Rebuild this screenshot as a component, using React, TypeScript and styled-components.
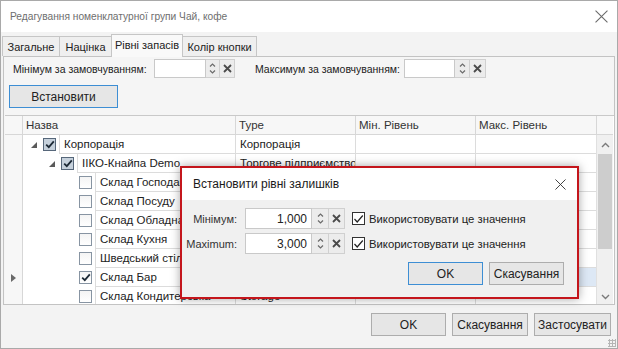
import React from "react";
import styled, { createGlobalStyle } from "styled-components";

const GlobalStyle = createGlobalStyle`
  html, body { margin: 0; padding: 0; background: #ffffff; }
  body { font-family: "Liberation Sans", Arial, sans-serif; }
  * { box-sizing: border-box; }
`;

const Window = styled.div`
  position: relative;
  width: 618px;
  height: 349px;
  border: 1px solid #a9a9a9;
  background: #f3f3f3;
  display: flex;
  flex-direction: column;
  overflow: hidden;
  color: #222;
`;

const TitleBar = styled.div`
  height: 31px;
  flex: none;
  background: #ffffff;
  display: flex;
  align-items: center;
  justify-content: space-between;
  padding: 0 9px 0 9px;
  font-size: 10.2px;
  color: #6e6e6e;
`;

const TabStrip = styled.div`
  height: 24px;
  flex: none;
  display: flex;
  align-items: flex-end;
  padding-left: 2px;
  background: #f3f3f3;
`;

const Tab = styled.div<{ $w: number; $active?: boolean }>`
  width: ${(p) => p.$w}px;
  height: ${(p) => (p.$active ? 23 : 20)}px;
  border: 1px solid #c6c6c6;
  border-bottom: none;
  margin-left: -1px;
  display: flex;
  align-items: center;
  justify-content: center;
  font-size: 11px;
  white-space: nowrap;
  color: #222;
  background: ${(p) => (p.$active ? "#f9f9f9" : "#efefef")};
  position: relative;
  z-index: ${(p) => (p.$active ? 1 : 0)};
  margin-bottom: ${(p) => (p.$active ? "-1px" : "0")};
  padding-bottom: ${(p) => (p.$active ? "3px" : "0")};
`;

const Frame = styled.div`
  margin: 0 2px 0 2px;
  height: 249px;
  flex: none;
  border: 1px solid #c3c3c3;
  background: #f5f5f5;
  display: flex;
  flex-direction: column;
`;

const FilterPanel = styled.div`
  height: 58px;
  flex: none;
  padding: 2px 0 0 9px;
  display: flex;
  flex-direction: column;
  gap: 7px;
`;

const FilterRow = styled.div`
  display: flex;
  align-items: center;
  height: 19px;
`;

const FilterLabel = styled.span<{ $w: number; $pad?: number }>`
  width: ${(p) => p.$w}px;
  padding-left: ${(p) => p.$pad ?? 0}px;
  flex: none;
  font-size: 10.5px;
  color: #222;
  white-space: nowrap;
`;

const SpinWrap = styled.div<{ $w: number; $h: number }>`
  display: flex;
  height: ${(p) => p.$h}px;
  width: ${(p) => p.$w}px;
  flex: none;
`;

const SpinInput = styled.div`
  flex: 1;
  background: #ffffff;
  border: 1px solid #c9c9c9;
  display: flex;
  align-items: center;
  justify-content: flex-end;
  padding-right: 4px;
  font-size: 12px;
  color: #222;
`;

const SpinBtn = styled.div<{ $w: number }>`
  width: ${(p) => p.$w}px;
  flex: none;
  border: 1px solid #d0d0d0;
  border-left: none;
  background: #ececec;
  display: flex;
  align-items: center;
  justify-content: center;
`;

const Button = styled.div<{ $w: number; $focused?: boolean; $shift?: number }>`
  width: ${(p) => p.$w}px;
  height: 23px;
  flex: none;
  margin-left: ${(p) => p.$shift ?? 0}px;
  border: 1px solid ${(p) => (p.$focused ? "#3d8ed4" : "#adadad")};
  background: #e6e6e6;
  display: flex;
  align-items: center;
  justify-content: center;
  font-size: 12px;
  color: #222;
`;

const Grid = styled.div`
  height: 189px;
  flex: none;
  border-top: 1px solid #c9c9c9;
  display: grid;
  grid-template-columns: 17px 213px 120px 120px 121px 17px;
  grid-template-rows: 19px repeat(9, 19px);
  background: #ffffff;
  overflow: hidden;
  font-size: 11.5px;
  margin-left: 1px;
  position: relative;
`;

const HeaderCell = styled.div<{ $first?: boolean }>`
  background: #f7f7f7;
  border-bottom: 1px solid #d7d7d7;
  border-left: ${(p) => (p.$first ? "none" : "1px solid #d7d7d7")};
  display: flex;
  align-items: center;
  padding-left: 3px;
  color: #333;
  font-size: 11.5px;
`;

const Indicator = styled.div<{ $header?: boolean }>`
  background: #f7f7f7;
  border-bottom: ${(p) => (p.$header ? "1px solid #d7d7d7" : "none")};
  display: flex;
  align-items: center;
  justify-content: center;
`;

const NameCell = styled.div<{ $indent: number }>`
  display: flex;
  align-items: stretch;
  padding-left: ${(p) => p.$indent}px;
  min-width: 0;
  border-left: 1px solid #d7d7d7;
`;

const Expander = styled.div`
  width: 12px;
  flex: none;
  display: flex;
  align-items: center;
  justify-content: flex-start;
`;

const TreeCheckBox = styled.div<{ $filled?: boolean }>`
  width: 13px;
  height: 13px;
  flex: none;
  align-self: center;
  border: 1px solid ${(p) => (p.$filled ? "#56677a" : "#8794a2")};
  background: ${(p) =>
    p.$filled ? "#c6d1dc" : "linear-gradient(#f4f4f4, #ffffff)"};
  display: flex;
  align-items: center;
  justify-content: center;
  margin-right: 3px;
`;

const NameText = styled.div`
  flex: 1;
  border-left: 1px solid #dcdcdc;
  border-bottom: 1px solid #dcdcdc;
  padding-left: 4px;
  display: flex;
  align-items: center;
  white-space: nowrap;
  overflow: hidden;
  color: #222;
`;

const DataCell = styled.div<{ $sel?: boolean }>`
  border-left: 1px solid #dcdcdc;
  border-bottom: 1px solid #dcdcdc;
  background: ${(p) => (p.$sel ? "#dde8f5" : "#ffffff")};
  display: flex;
  align-items: center;
  padding-left: 4px;
  white-space: nowrap;
  overflow: hidden;
  color: #222;
`;

const ScrollBar = styled.div`
  grid-column: 6;
  grid-row: 2 / span 9;
  background: #f0f0f0;
  border-left: 1px solid #e0e0e0;
  display: flex;
  flex-direction: column;
  align-items: stretch;
`;

const ScrollArrow = styled.div`
  height: 19px;
  flex: none;
  display: flex;
  align-items: center;
  justify-content: center;
`;

const ScrollThumb = styled.div`
  height: 95px;
  flex: none;
  background: #cdcdcd;
  margin: 0 1px;
`;

const ScrollTrack = styled.div`
  flex: 1;
`;

const Footer = styled.div`
  flex: 1;
  display: flex;
  justify-content: flex-end;
  align-items: flex-start;
  padding: 8px 6px 0 0;
  gap: 6px;
  position: relative;
`;

const Grip = styled.div`
  position: absolute;
  right: 1px;
  bottom: 1px;
  width: 8px;
  height: 8px;
  background-image: radial-gradient(circle, #b5b5b5 1px, transparent 1.2px);
  background-size: 3px 3px;
`;

/* Dialog */
const Dialog = styled.div`
  position: absolute;
  left: 179px;
  top: 165px;
  width: 399px;
  height: 133px;
  border: 2px solid #c4161c;
  background: #f0f0f0;
  box-shadow: 0 0 9px rgba(0, 0, 0, 0.35);
  display: flex;
  flex-direction: column;
  z-index: 5;
`;

const DialogTitle = styled.div`
  height: 32px;
  flex: none;
  background: #ffffff;
  display: flex;
  align-items: center;
  justify-content: space-between;
  padding: 0 11px 0 11px;
  font-size: 12px;
  color: #1a1a1a;
`;

const DialogBody = styled.div`
  flex: 1;
  display: flex;
  flex-direction: column;
  padding-top: 8px;
  gap: 4px;
`;

const DialogRow = styled.div`
  display: flex;
  align-items: center;
  height: 21px;
`;

const DialogLabel = styled.div`
  width: 63px;
  flex: none;
  font-size: 11px;
  color: #333;
  display: flex;
  justify-content: flex-end;
  padding-right: 8px;
`;

const CheckLabel = styled.label`
  display: flex;
  align-items: center;
  margin-left: 7px;
  font-size: 11.3px;
  color: #222;
  gap: 4px;
  white-space: nowrap;
`;

const FlatCheck = styled.div`
  width: 13px;
  height: 13px;
  border: 1px solid #333;
  background: #fff;
  display: flex;
  align-items: center;
  justify-content: center;
`;

const DialogButtons = styled.div`
  display: flex;
  justify-content: flex-end;
  gap: 6px;
  padding: 4px 13px 0 0;
`;

const CloseIcon = ({ size = 12, color = "#555" }: { size?: number; color?: string }) => (
  <svg width={size} height={size} viewBox="0 0 12 12">
    <path d="M0.5 0.5 L11.5 11.5 M11.5 0.5 L0.5 11.5" stroke={color} strokeWidth="1" fill="none" />
  </svg>
);

const SpinArrows = () => (
  <svg width="7" height="13" viewBox="0 0 7 13">
    <path d="M1 4.5 L3.5 2 L6 4.5" stroke="#6b6b6b" strokeWidth="1.2" fill="none" />
    <path d="M1 8.5 L3.5 11 L6 8.5" stroke="#6b6b6b" strokeWidth="1.2" fill="none" />
  </svg>
);

const ClearX = () => (
  <svg width="9" height="9" viewBox="0 0 9 9">
    <path d="M1 1 L8 8 M8 1 L1 8" stroke="#4a4a4a" strokeWidth="1.8" fill="none" />
  </svg>
);

const Check = ({ color = "#1d2a36" }: { color?: string }) => (
  <svg width="10" height="9" viewBox="0 0 10 9">
    <path d="M1.2 4.6 L3.8 7.2 L8.8 1.4" stroke={color} strokeWidth="1.8" fill="none" />
  </svg>
);

const ThinCheck = () => (
  <svg width="11" height="10" viewBox="0 0 11 10">
    <path d="M1.5 5 L4.2 8 L9.8 1.5" stroke="#222" strokeWidth="1.2" fill="none" />
  </svg>
);

const ExpandTri = () => (
  <svg width="6" height="6" viewBox="0 0 6 6">
    <path d="M0 6 L6 6 L6 0 Z" fill="#5a5a5a" />
  </svg>
);

const RowArrow = () => (
  <svg width="5" height="8" viewBox="0 0 5 8">
    <path d="M0 0 L5 4 L0 8 Z" fill="#6a6a6a" />
  </svg>
);

const Chevron = ({ up }: { up?: boolean }) => (
  <svg width="9" height="6" viewBox="0 0 9 6">
    <path d={up ? "M1 5 L4.5 1.5 L8 5" : "M1 1 L4.5 4.5 L8 1"} stroke="#7a7a7a" strokeWidth="1.4" fill="none" />
  </svg>
);

type SpinProps = { w: number; h: number; value?: string; spinW: number; clearW: number };

const SpinEdit = ({ w, h, value, spinW, clearW }: SpinProps) => (
  <SpinWrap $w={w} $h={h}>
    <SpinInput>{value}</SpinInput>
    <SpinBtn $w={spinW}>
      <SpinArrows />
    </SpinBtn>
    <SpinBtn $w={clearW}>
      <ClearX />
    </SpinBtn>
  </SpinWrap>
);

type Row = {
  level: number;
  expand?: boolean;
  checked?: boolean;
  filled?: boolean;
  name: string;
  type: string;
  current?: boolean;
};

const rows: Row[] = [
  { level: 0, expand: true, checked: true, filled: true, name: "Корпорація", type: "Корпорація" },
  { level: 1, expand: true, checked: true, filled: true, name: "ІІКО-Кнайпа Demo", type: "Торгове підприємство" },
  { level: 2, name: "Склад Господарський", type: "Storage" },
  { level: 2, name: "Склад Посуду", type: "Storage" },
  { level: 2, name: "Склад Обладнання", type: "Storage" },
  { level: 2, name: "Склад Кухня", type: "Storage" },
  { level: 2, name: "Шведський стіл", type: "Storage" },
  { level: 2, checked: true, name: "Склад Бар", type: "Storage", current: true },
  { level: 2, name: "Склад Кондитерська", type: "Storage" },
];

export default function App() {
  return (
    <>
      <GlobalStyle />
      <Window>
        <TitleBar>
          <span>Редагування номенклатурної групи Чай, кофе</span>
          <CloseIcon size={13} color="#6a6a6a" />
        </TitleBar>
        <TabStrip>
          <Tab $w={58}>Загальне</Tab>
          <Tab $w={53}>Націнка</Tab>
          <Tab $w={72} $active>
            Рівні запасів
          </Tab>
          <Tab $w={75}>Колір кнопки</Tab>
        </TabStrip>
        <Frame>
          <FilterPanel>
            <FilterRow>
              <FilterLabel $w={141}>Мінімум за замовчуванням:</FilterLabel>
              <SpinEdit w={81} h={19} spinW={14} clearW={15} />
              <FilterLabel $w={169} $pad={20}>
                Максимум за замовчуванням:
              </FilterLabel>
              <SpinEdit w={82} h={19} spinW={15} clearW={16} />
            </FilterRow>
            <Button $w={109} $focused $shift={-4}>
              Встановити
            </Button>
          </FilterPanel>
          <Grid>
            <Indicator $header />
            <HeaderCell>Назва</HeaderCell>
            <HeaderCell>Type</HeaderCell>
            <HeaderCell>Мін. Рівень</HeaderCell>
            <HeaderCell>Макс. Рівень</HeaderCell>
            <HeaderCell />
            {rows.map((r) => (
              <React.Fragment key={r.name}>
                <Indicator>{r.current ? <RowArrow /> : null}</Indicator>
                <NameCell $indent={8 + 18 * r.level}>
                  <Expander>{r.expand ? <ExpandTri /> : null}</Expander>
                  <TreeCheckBox $filled={r.filled}>{r.checked ? <Check /> : null}</TreeCheckBox>
                  <NameText>{r.name}</NameText>
                </NameCell>
                <DataCell $sel={r.current}>{r.type}</DataCell>
                <DataCell $sel={r.current} />
                <DataCell $sel={r.current} />
              </React.Fragment>
            ))}
            <ScrollBar>
              <ScrollArrow>
                <Chevron up />
              </ScrollArrow>
              <ScrollThumb />
              <ScrollTrack />
              <ScrollArrow>
                <Chevron />
              </ScrollArrow>
            </ScrollBar>
          </Grid>
        </Frame>
        <Footer>
          <Button $w={75}>OK</Button>
          <Button $w={76}>Скасування</Button>
          <Button $w={77}>Застосувати</Button>
          <Grip />
        </Footer>

        <Dialog>
          <DialogTitle>
            <span>Встановити рівні залишків</span>
            <CloseIcon size={11} color="#333" />
          </DialogTitle>
          <DialogBody>
            <DialogRow>
              <DialogLabel>Мінімум:</DialogLabel>
              <SpinEdit w={100} h={21} value="1,000" spinW={17} clearW={16} />
              <CheckLabel>
                <FlatCheck>
                  <ThinCheck />
                </FlatCheck>
                Використовувати це значення
              </CheckLabel>
            </DialogRow>
            <DialogRow>
              <DialogLabel>Maximum:</DialogLabel>
              <SpinEdit w={100} h={21} value="3,000" spinW={17} clearW={16} />
              <CheckLabel>
                <FlatCheck>
                  <ThinCheck />
                </FlatCheck>
                Використовувати це значення
              </CheckLabel>
            </DialogRow>
            <DialogButtons>
              <Button $w={75} $focused>
                OK
              </Button>
              <Button $w={75}>Скасування</Button>
            </DialogButtons>
          </DialogBody>
        </Dialog>
      </Window>
    </>
  );
}
